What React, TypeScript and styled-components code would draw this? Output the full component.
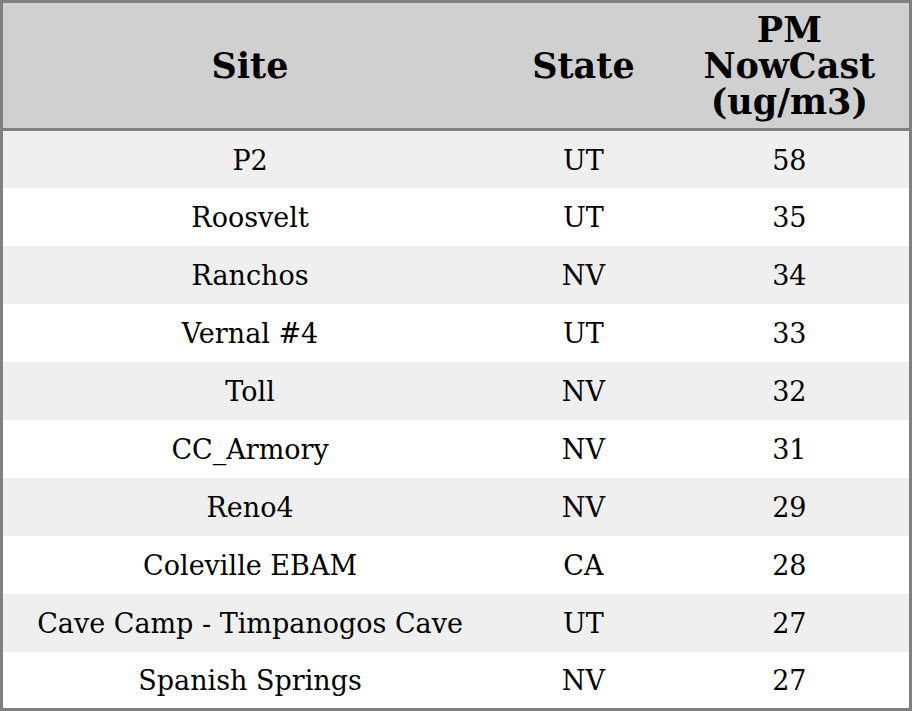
import * as React from 'react';
import styled, { createGlobalStyle } from "styled-components";

const rows = [
    { site: "P2", state: "UT", pm: 58 },
    { site: "Roosvelt", state: "UT", pm: 35 },
    { site: "Ranchos", state: "NV", pm: 34 },
    { site: "Vernal #4", state: "UT", pm: 33 },
    { site: "Toll", state: "NV", pm: 32 },
    { site: "CC_Armory", state: "NV", pm: 31 },
    { site: "Reno4", state: "NV", pm: 29 },
    { site: "Coleville EBAM", state: "CA", pm: 28 },
    { site: "Cave Camp - Timpanogos Cave", state: "UT", pm: 27 },
    { site: "Spanish Springs", state: "NV", pm: 27 },
];

const GlobalStyle = createGlobalStyle`
    html, body {
        margin: 0;
        padding: 0;
        background: #ffffff;
    }
`;

const App = () => (
    <>
        <GlobalStyle />
        <Table>
            <colgroup>
                <Col $width={494} />
                <Col $width={172} />
                <Col $width={240} />
            </colgroup>
            <thead>
                <tr>
                    <HeadCell>Site</HeadCell>
                    <HeadCell>State</HeadCell>
                    <HeadCell>
                        <HeadLine>PM</HeadLine>
                        <HeadLine>NowCast</HeadLine>
                        <HeadLine>(ug/m3)</HeadLine>
                    </HeadCell>
                </tr>
            </thead>
            <tbody>
                {rows.map((row, i) => (
                    <Row key={row.site} $striped={i % 2 === 0}>
                        <Cell>{row.site}</Cell>
                        <Cell>{row.state}</Cell>
                        <Cell>{row.pm}</Cell>
                    </Row>
                ))}
            </tbody>
        </Table>
    </>
);

const Table = styled.table`
    width: 912px;
    height: 711px;
    box-sizing: border-box;
    border-collapse: collapse;
    table-layout: fixed;
    border: 3px solid #808080;
    font-family: "DejaVu Serif", serif;
    color: #000000;
`;

const Col = styled.col<{ $width: number }>`
    width: ${p => p.$width}px;
`;

const HeadCell = styled.th`
    height: 125px;
    padding: 0 2px;
    background: #d0d0d0;
    border-bottom: 3px solid #808080;
    font-size: 35px;
    font-weight: bold;
    line-height: 36px;
    text-align: center;
    vertical-align: middle;
`;

const HeadLine = styled.div`
    height: 36px;
    line-height: 36px;
    overflow: visible;
`;

const Row = styled.tr<{ $striped: boolean }>`
    height: 58px;
    background: ${p => (p.$striped ? "#efefef" : "#ffffff")};
`;

const Cell = styled.td`
    padding: 2px 2px 0;
    font-size: 27px;
    text-align: center;
    vertical-align: middle;
`;

export default App;
